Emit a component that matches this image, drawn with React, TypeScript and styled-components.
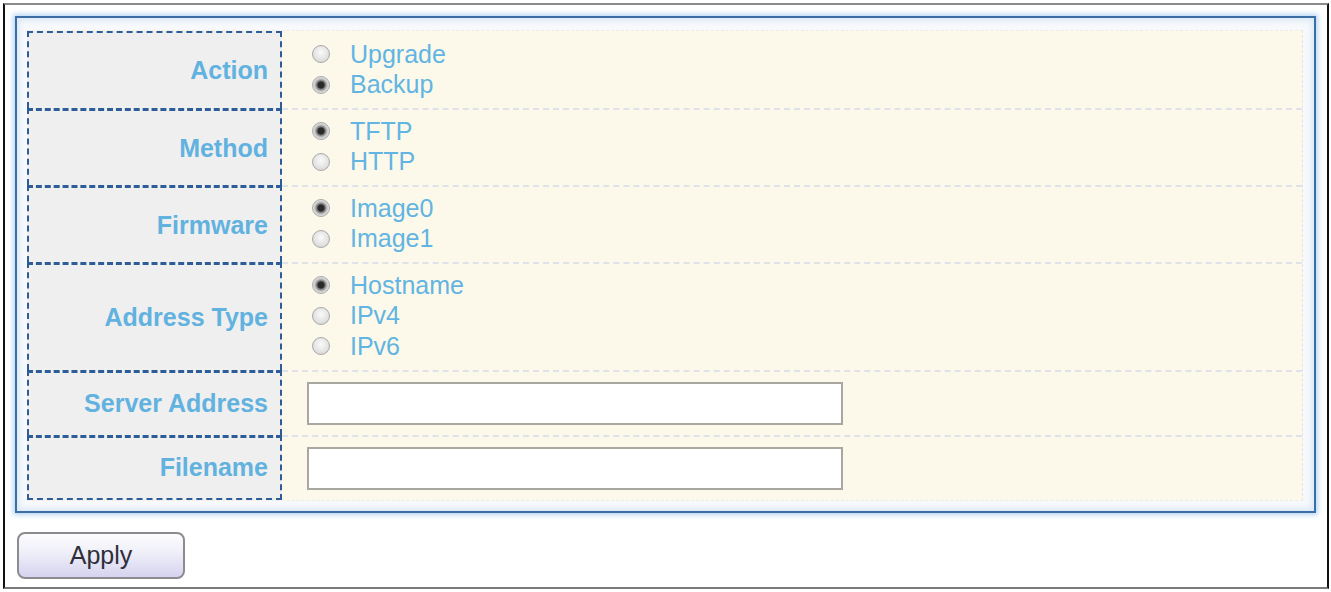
import React from 'react';
import styled, { createGlobalStyle } from 'styled-components';

const GlobalStyle = createGlobalStyle`
  html, body {
    margin: 0;
    padding: 0;
    background: #ffffff;
  }

  body {
    font-family: "Liberation Sans", Arial, sans-serif;
  }
`;

const Frame = styled.div`
  margin: 3px 2px 3px 3px;
  height: 586px;
  box-sizing: border-box;
  border-left: 2px solid #111;
  border-right: 2px solid #111;
  border-top: 2px solid #8a8a8a;
  border-bottom: 2px solid #7a7a7a;
  padding: 11px 11px 0 10px;
`;

const Panel = styled.div`
  border: 2px solid #3c6ea6;
  box-shadow: 0 0 5px 2px #b9d6f2, inset 0 0 6px 2px #d6e6f7;
  background: #f7f9fc;
  padding: 12px 11px 10px 10px;
`;

const Table = styled.div`
  display: flex;
  flex-direction: column;
  border-right: 1px dashed #e3e3e3;
  border-top: 1px dashed #ececec;
  border-bottom: 1px dashed #ececec;
  background: #fcf9ea;
`;

const LabelCell = styled.div`
  box-sizing: border-box;
  width: 255px;
  flex-shrink: 0;
  display: flex;
  align-items: center;
  justify-content: flex-end;
  padding-right: 12px;
  background: #efefef;
  border-left: 2px dashed #2d5d98;
  border-right: 2px dashed #2d5d98;
  border-top: 3px dashed #2d5d98;
  color: #62b2e0;
  font-weight: bold;
  font-size: 25px;
`;

const ValueCell = styled.div<{ $pad: string }>`
  flex: 1;
  display: flex;
  flex-direction: column;
  justify-content: center;
  padding: ${(p) => p.$pad};
  border-top: 2px dashed #e0e2ea;
`;

const Row = styled.div`
  display: flex;

  &:first-child ${LabelCell} {
    border-top-width: 2px;
  }

  &:first-child ${ValueCell} {
    border-top-color: transparent;
  }

  &:last-child ${LabelCell} {
    border-bottom: 2px dashed #2d5d98;
  }
`;

const Option = styled.label`
  display: flex;
  align-items: center;
  height: 30.5px;
  gap: 20px;
  color: #62b4e2;
  font-size: 25px;
`;

const Radio = styled.input.attrs({ type: 'radio' })`
  appearance: none;
  margin: 0;
  width: 18px;
  height: 18px;
  border-radius: 50%;
  border: 1px solid #a9a9a9;
  background: radial-gradient(circle at 50% 40%, #fafafa 0, #e2e2e2 60%, #cdcdcd 100%);

  &:checked {
    background: radial-gradient(circle, #2a2a2a 0 3px, #6e6e6e 4px, #c0c0c0 6px, #e4e4e4 8px);
  }
`;

const TextBox = styled.input.attrs({ type: 'text' })`
  box-sizing: border-box;
  width: 536px;
  height: 43px;
  margin: 0;
  background: #fff;
  border: 2px solid #a8a8a0;
  outline: none;
`;

const Footer = styled.div`
  padding: 19px 0 0 2px;
`;

const ApplyButton = styled.button`
  width: 168px;
  height: 47px;
  border: 2px solid #8c8c90;
  border-radius: 8px;
  background: linear-gradient(to bottom, #fdfdfd 0%, #eeeef8 45%, #d6d3ef 100%);
  color: #2e2e3a;
  font-family: "Liberation Sans", Arial, sans-serif;
  font-size: 25px;
  padding: 0;
`;

type Field = {
  label: string;
  name: string;
  options?: string[];
  checked?: number;
};

const fields: Field[] = [
  { label: 'Action', name: 'action', options: ['Upgrade', 'Backup'], checked: 1 },
  { label: 'Method', name: 'method', options: ['TFTP', 'HTTP'], checked: 0 },
  { label: 'Firmware', name: 'firmware', options: ['Image0', 'Image1'], checked: 0 },
  { label: 'Address Type', name: 'addrType', options: ['Hostname', 'IPv4', 'IPv6'], checked: 0 },
  { label: 'Server Address', name: 'server' },
  { label: 'Filename', name: 'filename' },
];

const App = () => {
  return (
    <>
      <GlobalStyle />
      <Frame>
        <Panel>
          <Table>
            {fields.map((f) => (
              <Row key={f.name}>
                <LabelCell>{f.label}</LabelCell>
                {f.options ? (
                  <ValueCell $pad="6px 0 8px 30px">
                    {f.options.map((opt, i) => (
                      <Option key={opt}>
                        <Radio name={f.name} defaultChecked={i === f.checked} />
                        {opt}
                      </Option>
                    ))}
                  </ValueCell>
                ) : (
                  <ValueCell $pad="10px 0 10px 25px">
                    <TextBox name={f.name} />
                  </ValueCell>
                )}
              </Row>
            ))}
          </Table>
        </Panel>
        <Footer>
          <ApplyButton>Apply</ApplyButton>
        </Footer>
      </Frame>
    </>
  );
};

export default App;
